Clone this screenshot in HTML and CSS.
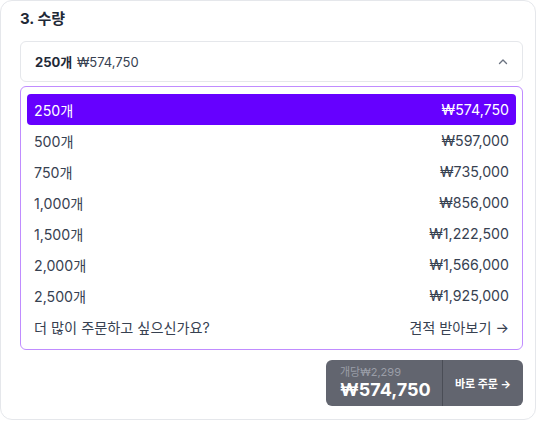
FILE: index.html
```html
<!DOCTYPE html>
<html lang="ko">
<head>
    <meta charset="UTF-8">
    <meta name="viewport" content="width=device-width, initial-scale=1.0">
    <title>수량 선택</title>
    <link rel="stylesheet" href="styles.css">
</head>
<body>
    <div class="option-card">
        <h2 class="option-title">3. 수량</h2>

        <div class="select-box">
            <span class="select-value"><b>250개</b> ₩574,750</span>
            <svg class="chevron" width="12" height="12" viewBox="0 0 12 12">
                <path d="M2.5 7.5 L6 4 L9.5 7.5" fill="none" stroke="#6b7280" stroke-width="1.4" stroke-linecap="round" stroke-linejoin="round"/>
            </svg>
        </div>

        <ul class="dropdown">
            <li class="active"><span>250개</span><span>₩574,750</span></li>
            <li><span>500개</span><span>₩597,000</span></li>
            <li><span>750개</span><span>₩735,000</span></li>
            <li><span>1,000개</span><span>₩856,000</span></li>
            <li><span>1,500개</span><span>₩1,222,500</span></li>
            <li><span>2,000개</span><span>₩1,566,000</span></li>
            <li><span>2,500개</span><span>₩1,925,000</span></li>
            <li><span>더 많이 주문하고 싶으신가요?</span><span>견적 받아보기 →</span></li>
        </ul>

        <div class="order-row">
            <div class="order-btn">
                <div class="order-price">
                    <span class="unit-price">개당₩2,299</span>
                    <span class="total-price">₩574,750</span>
                </div>
                <div class="order-action">바로 주문 →</div>
            </div>
        </div>
    </div>
</body>
</html>
```

FILE: styles.css
```css
* {
    box-sizing: border-box;
}

body {
    margin: 0;
    font-family: Inter, "Noto Sans CJK KR", sans-serif;
    color: #374151;
    background-color: #fff;
}

.option-card {
    width: 536px;
    height: 420px;
    border: 1px solid #e5e7eb;
    border-radius: 12px;
    padding: 8px 12px 12px 19px;
}

.option-title {
    margin: 0 0 12px;
    font-size: 15px;
    line-height: 20px;
    font-weight: 700;
    color: #1f2937;
}

.select-box {
    height: 41px;
    border: 1px solid #e5e7eb;
    border-radius: 6px;
    display: flex;
    align-items: center;
    justify-content: space-between;
    padding: 0 13px 0 14px;
    font-size: 13px;
    color: #374151;
}

.select-value b {
    font-weight: 700;
    color: #1f2937;
    margin-right: 1px;
}

.dropdown {
    list-style: none;
    margin: 4px 0 0;
    padding: 7px 6px;
    border: 1.5px solid #c08cff;
    border-radius: 6px;
}

.dropdown li {
    display: flex;
    justify-content: space-between;
    align-items: center;
    height: 31px;
    padding: 0 7px;
    font-size: 14.2px;
    color: #374151;
    border-radius: 4px;
}

.dropdown li.active {
    background-color: #6600ff;
    color: #fff;
}

.order-row {
    display: flex;
    justify-content: flex-end;
    margin-top: 10px;
}

.order-btn {
    display: flex;
    height: 46px;
    width: 197px;
    background-color: #62656f;
    border-radius: 6px;
    color: #fff;
}

.order-price {
    width: 117px;
    display: flex;
    flex-direction: column;
    justify-content: center;
    padding-left: 14px;
    border-right: 1px solid #4a4d56;
}

.unit-price {
    font-size: 11px;
    line-height: 13px;
    color: #9a9ea8;
}

.total-price {
    font-size: 18px;
    line-height: 22px;
    font-weight: 700;
}

.order-action {
    flex: 1;
    display: flex;
    align-items: center;
    justify-content: center;
    font-size: 11px;
    font-weight: 700;
}
```
